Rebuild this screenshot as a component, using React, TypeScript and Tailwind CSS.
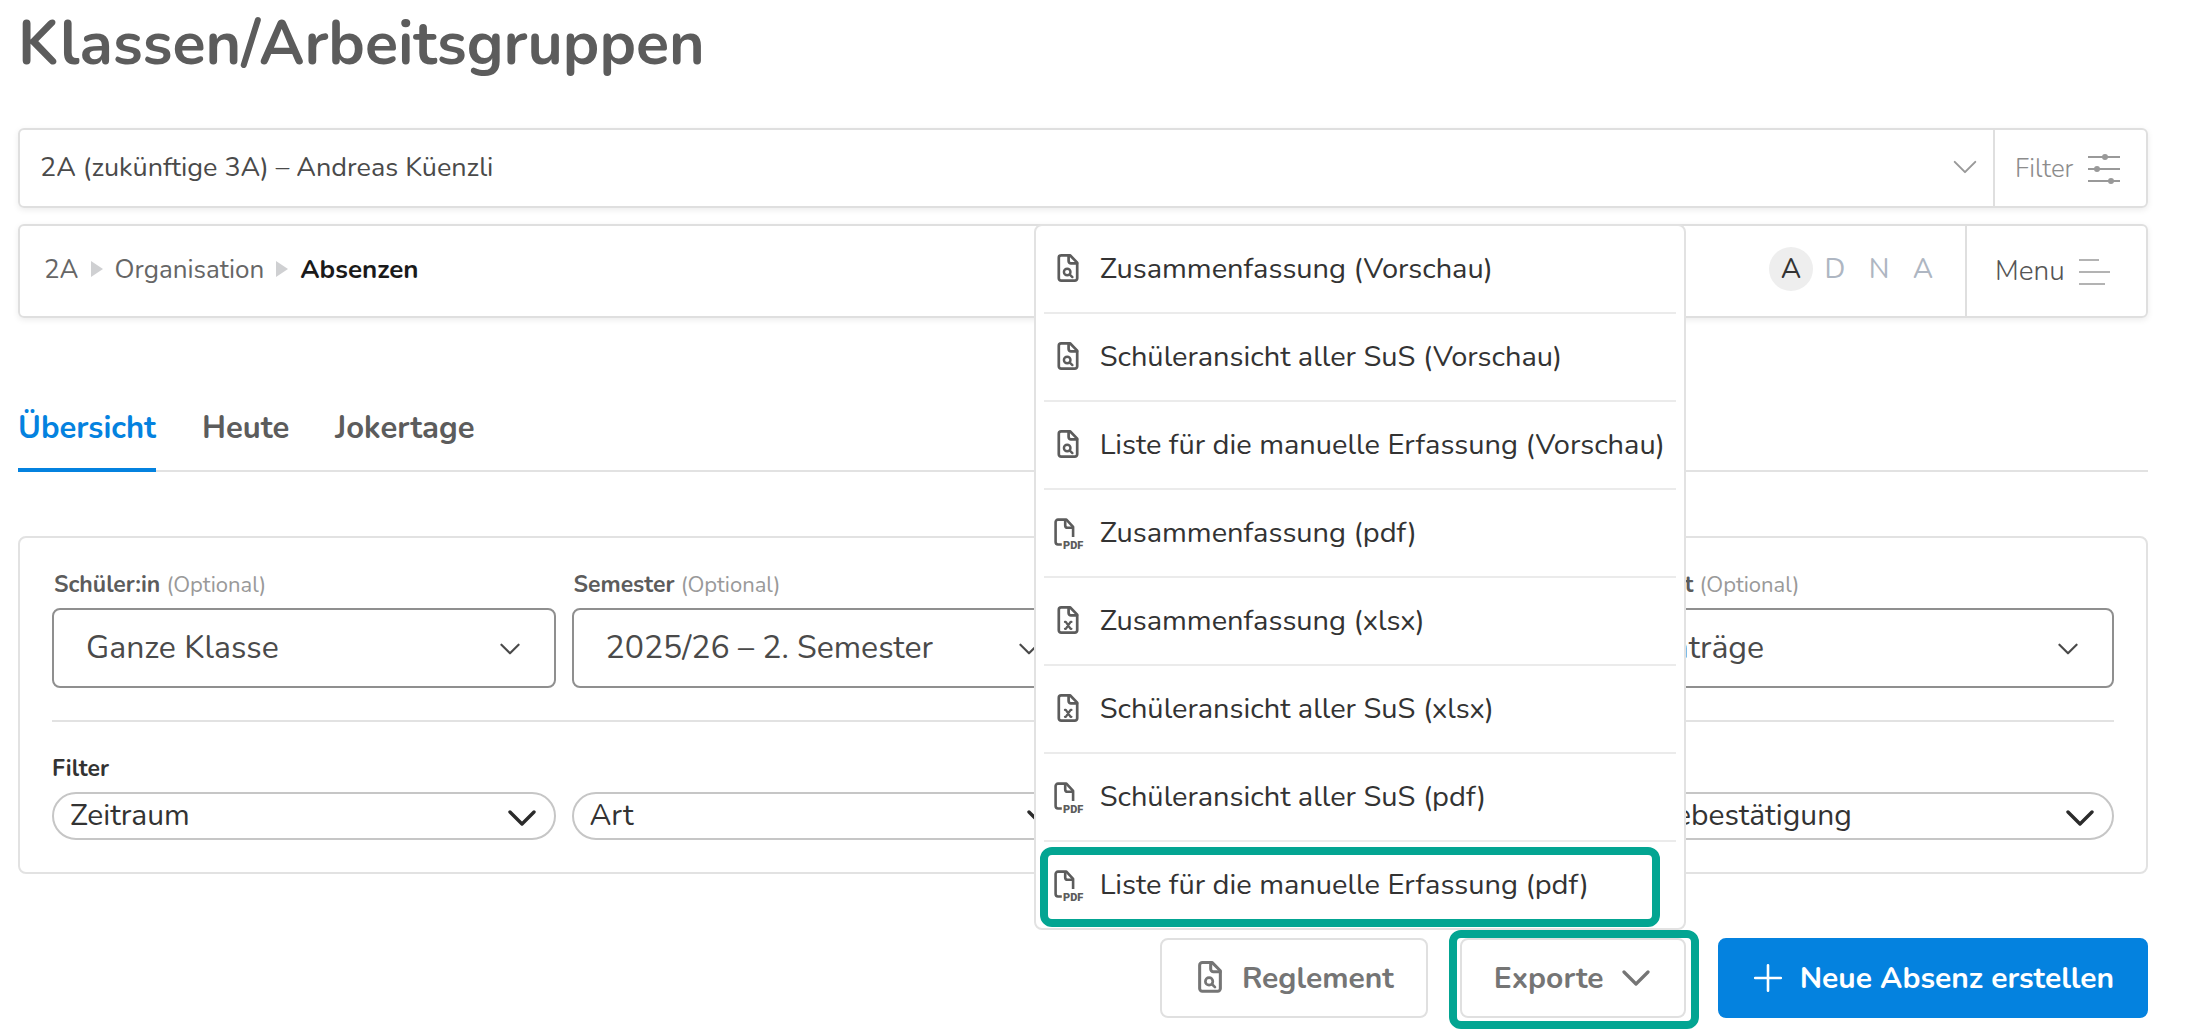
import type { ReactNode } from 'react';

import React from 'react';

type ExportKind = 'preview' | 'pdf' | 'xlsx';

interface ExportEntry {
  label: string;
  kind: ExportKind;
  highlighted?: boolean;
}

const EXPORTS: ExportEntry[] = [
  { label: 'Zusammenfassung (Vorschau)', kind: 'preview' },
  { label: 'Schüleransicht aller SuS (Vorschau)', kind: 'preview' },
  { label: 'Liste für die manuelle Erfassung (Vorschau)', kind: 'preview' },
  { label: 'Zusammenfassung (pdf)', kind: 'pdf' },
  { label: 'Zusammenfassung (xlsx)', kind: 'xlsx' },
  { label: 'Schüleransicht aller SuS (xlsx)', kind: 'xlsx' },
  { label: 'Schüleransicht aller SuS (pdf)', kind: 'pdf' },
  {
    label: 'Liste für die manuelle Erfassung (pdf)',
    kind: 'pdf',
    highlighted: true,
  },
];

const TABS = ['Übersicht', 'Heute', 'Jokertage'];

function FileOutline() {
  return (
    <>
      <path d="M18 3.3H9.2a2.4 2.4 0 0 0-2.4 2.4v20.6a2.4 2.4 0 0 0 2.4 2.4h13.6a2.4 2.4 0 0 0 2.4-2.4V10.6Z" />
      <path d="M16.6 3.6V9a2.4 2.4 0 0 0 2.4 2.4h6" />
    </>
  );
}

function FileSearchIcon({ className }: { className: string }) {
  return (
    <svg
      className={className}
      viewBox="0 1 32 32"
      fill="none"
      stroke="currentColor"
      strokeWidth="2.7"
      strokeLinejoin="round"
      strokeLinecap="round"
      aria-hidden="true"
    >
      <FileOutline />
      <circle cx="15.2" cy="20" r="3.3" strokeWidth="2.4" />
      <path d="m17.8 22.6 2.6 2.5" strokeWidth="2.4" />
    </svg>
  );
}

function FileXlsxIcon({ className }: { className: string }) {
  return (
    <svg
      className={className}
      viewBox="0 1 32 32"
      fill="none"
      stroke="currentColor"
      strokeWidth="2.7"
      strokeLinejoin="round"
      strokeLinecap="round"
      aria-hidden="true"
    >
      <FileOutline />
      <path
        d="M13 17.9h.8l4.8 6.9h.8M19.4 17.9h-.8l-4.8 6.9H13"
        strokeWidth="2.3"
      />
    </svg>
  );
}

function FilePdfIcon({ className }: { className: string }) {
  return (
    <svg
      className={className}
      viewBox="0 0 32 32"
      fill="none"
      stroke="currentColor"
      strokeWidth="2.6"
      strokeLinejoin="round"
      aria-hidden="true"
    >
      <path d="M9.8 27.5H6a2.4 2.4 0 0 1-2.4-2.4V5A2.4 2.4 0 0 1 6 2.6h8.4l6.7 7.2V20" />
      <path d="M13.2 2.8v5.6a2.4 2.4 0 0 0 2.4 2.4h5.4" />
      <text
        x="11"
        y="31.8"
        className="font-['Roboto',sans-serif] text-[11px] font-black"
        fill="currentColor"
        stroke="none"
      >
        PDF
      </text>
    </svg>
  );
}

function Chevron({
  className,
  strokeWidth,
}: {
  className: string;
  strokeWidth: number;
}) {
  return (
    <svg
      className={className}
      viewBox="0 0 28 16"
      fill="none"
      stroke="currentColor"
      strokeWidth={strokeWidth}
      strokeLinecap="round"
      strokeLinejoin="round"
      aria-hidden="true"
    >
      <path d="m2 2 12 12L26 2" />
    </svg>
  );
}

function ExportIcon({ kind }: { kind: ExportKind }) {
  const className = 'size-8 shrink-0 text-[#5c5c5c]';
  if (kind === 'pdf') return <FilePdfIcon className={className} />;
  if (kind === 'xlsx') return <FileXlsxIcon className={className} />;
  return <FileSearchIcon className={className} />;
}

function BreadcrumbArrow() {
  return (
    <svg
      className="h-4 w-3 text-[#cfd0d2]"
      viewBox="0 0 12 16"
      fill="currentColor"
      aria-hidden="true"
    >
      <path d="M0 0v16l12-8Z" />
    </svg>
  );
}

interface FieldProps {
  id: string;
  label: string;
  value: string;
  className?: string;
}

function SelectField({ id, label, value, className = '' }: FieldProps) {
  return (
    <div className={className}>
      <label
        htmlFor={id}
        className="mb-2 ml-0.5 block text-[23px] leading-[30px] font-bold text-[#5c5c5c]"
      >
        {label}{' '}
        <span className="text-[22px] font-normal text-[#999]">(Optional)</span>
      </label>
      <div className="relative">
        <select
          id={id}
          className="block h-20 w-full appearance-none rounded-lg border-2 border-[#8f8f8f] bg-white pl-8 text-[32px] text-[#4a4a4a]"
        >
          <option>{value}</option>
        </select>
        <Chevron
          className="pointer-events-none absolute top-[35px] right-9 h-3 w-5 text-[#4a4a4a]"
          strokeWidth={3}
        />
      </div>
    </div>
  );
}

function PillSelect({ label, className = '' }: { label: string; className?: string }) {
  return (
    <div className={`relative ${className}`}>
      <select
        aria-label={label}
        className="block h-12 w-full appearance-none rounded-full border-2 border-[#c6c6c6] bg-white pl-4 text-[30px] leading-[40px] text-[#333]"
      >
        <option>{label}</option>
      </select>
      <Chevron
        className="pointer-events-none absolute top-[18px] right-5 h-4 w-7 text-[#2b2b2b]"
        strokeWidth={3.4}
      />
    </div>
  );
}

function ActionButton({
  children,
  primary = false,
}: {
  children: ReactNode;
  primary?: boolean;
}) {
  const colors = primary
    ? 'border-[#0482df] bg-[#0482df] text-white'
    : 'border-[#e0e0e0] bg-white text-[#757575]';
  return (
    <button
      type="button"
      className={`flex h-20 items-center gap-4 rounded-lg border-2 px-8 text-[30px] font-bold ${colors}`}
    >
      {children}
    </button>
  );
}

function ExportMenu() {
  return (
    <ul
      role="menu"
      className="absolute right-0 bottom-full z-10 mb-2 w-[652px] divide-y-2 divide-[#ebebeb] rounded-lg border-2 border-[#e2e2e2] bg-white px-2"
    >
      {EXPORTS.map(({ label, kind, highlighted }) => (
        <li key={label} role="none" className="relative">
          <button
            type="button"
            role="menuitem"
            className="flex h-[86px] w-full items-center gap-4 pl-2 text-left text-[29px] whitespace-nowrap text-[#333]"
          >
            <ExportIcon kind={kind} />
            {label}
          </button>
          {highlighted && (
            <div className="pointer-events-none absolute top-[5px] right-4 bottom-px -left-1 rounded-xl border-8 border-[#03a592]" />
          )}
        </li>
      ))}
    </ul>
  );
}

function ClassBar() {
  return (
    <div className="mt-12 flex h-20 rounded-md border-2 border-[#dfdfdf] shadow-[0_2px_6px_rgba(0,0,0,0.08)]">
      <div className="relative grow">
        <select
          aria-label="Klasse"
          className="block h-full w-full appearance-none bg-transparent pl-5 text-[27px] text-[#4a4a4a]"
        >
          <option>2A (zukünftige 3A) – Andreas Küenzli</option>
        </select>
        <Chevron
          className="pointer-events-none absolute top-[30px] right-4 h-[14px] w-6 text-[#999]"
          strokeWidth={2.3}
        />
      </div>
      <button
        type="button"
        className="flex w-[153px] items-center gap-[14px] border-l-2 border-[#dfdfdf] pl-5 text-[26px] font-light text-[#8c8c8c]"
      >
        Filter
        <svg
          className="h-8 w-8 shrink-0 text-[#999]"
          viewBox="0 0 32 32"
          fill="currentColor"
          stroke="currentColor"
          strokeWidth="2"
          aria-hidden="true"
        >
          <path d="M0 5h32M0 17h32M0 29h32" />
          <circle cx="17" cy="5" r="2" />
          <circle cx="9" cy="17" r="2" />
          <circle cx="23" cy="29" r="2" />
        </svg>
      </button>
    </div>
  );
}

function BreadcrumbBar() {
  return (
    <div className="mt-4 flex h-[94px] rounded-md border-2 border-[#dfdfdf] shadow-[0_2px_6px_rgba(0,0,0,0.08)]">
      <nav
        className="flex grow items-center pb-1 pl-6 text-[26px] text-[#666]"
        aria-label="Pfad"
      >
        <ol className="flex items-center gap-3">
          <li>
            <a href="#klasse">2A</a>
          </li>
          <li className="flex items-center gap-3">
            <BreadcrumbArrow />
            <a href="#organisation">Organisation</a>
          </li>
          <li className="flex items-center gap-3">
            <BreadcrumbArrow />
            <span className="font-bold text-[#1a1a1a]">Absenzen</span>
          </li>
        </ol>
      </nav>
      <div className="flex items-center pr-5 pb-1 text-[28px] text-[#aeb6c2]">
        <button
          type="button"
          className="size-11 rounded-full bg-[#eee] text-[#333]"
        >
          A
        </button>
        <button type="button" className="size-11">
          D
        </button>
        <button type="button" className="size-11">
          N
        </button>
        <button type="button" className="size-11">
          A
        </button>
      </div>
      <button
        type="button"
        className="flex w-[181px] items-center gap-[14px] border-l-2 border-[#dfdfdf] pl-7 text-[28px] font-light text-[#555]"
      >
        Menu
        <svg
          className="h-8 w-8 shrink-0 text-[#b3b3b3]"
          viewBox="0 0 32 32"
          fill="none"
          stroke="currentColor"
          strokeWidth="2"
          aria-hidden="true"
        >
          <path d="M0 5h20M0 17h31M0 29h26" />
        </svg>
      </button>
    </div>
  );
}

export default function App() {
  return (
    <main className="bg-white pt-2 pr-[38px] pb-[18px] pl-[18px] font-['Nunito','Open_Sans',sans-serif]">
      <h1 className="text-[61px] leading-[72px] font-bold text-[#5c5c5c]">
        Klassen/Arbeitsgruppen
      </h1>

      <ClassBar />
      <BreadcrumbBar />

      <div
        role="tablist"
        className="mt-[90px] flex gap-[46px] border-b-2 border-[#e2e2e2]"
      >
        {TABS.map((tab, index) => (
          <button
            key={tab}
            type="button"
            role="tab"
            aria-selected={index === 0}
            className={
              index === 0
                ? '-mb-0.5 border-b-4 border-[#0482df] pb-5 text-[31px] leading-[40px] font-bold text-[#0482df]'
                : '-mb-0.5 border-b-4 border-transparent pb-5 text-[31px] leading-[40px] font-bold text-[#5c5c5c]'
            }
          >
            {tab}
          </button>
        ))}
      </div>

      <section className="mt-16 rounded-lg border-2 border-[#e2e2e2] p-8">
        <div className="grid grid-cols-4 gap-4 border-b-2 border-[#e2e2e2] pb-8">
          <SelectField id="schueler" label="Schüler:in" value="Ganze Klasse" />
          <SelectField
            id="semester"
            label="Semester"
            value="2025/26 – 2. Semester"
          />
          <SelectField
            id="ansicht"
            label="Ansicht"
            value="Einträge"
            className="col-start-4"
          />
        </div>
        <h2 className="mt-8 mb-2 text-[23px] leading-[30px] font-bold text-[#333]">
          Filter
        </h2>
        <div className="grid grid-cols-4 gap-4">
          <PillSelect label="Zeitraum" />
          <PillSelect label="Art" />
          <PillSelect label="Lesebestätigung" className="col-start-4" />
        </div>
      </section>

      <div className="mt-16 flex justify-end gap-8">
        <ActionButton>
          <FileSearchIcon className="-mx-0.5 size-9" />
          Reglement
        </ActionButton>
        <div className="relative">
          <ActionButton>
            Exporte
            <Chevron className="mx-0.5 h-4 w-7" strokeWidth={3.2} />
          </ActionButton>
          <div className="pointer-events-none absolute -top-2 -right-[13px] -bottom-[11px] -left-[11px] z-20 rounded-xl border-8 border-[#03a592]" />
          <ExportMenu />
        </div>
        <ActionButton primary>
          <svg
            className="size-8"
            viewBox="0 0 32 32"
            fill="none"
            stroke="currentColor"
            strokeWidth="2.6"
            strokeLinecap="round"
            aria-hidden="true"
          >
            <path d="M16 3.2v25.6M3.2 16h25.6" />
          </svg>
          Neue Absenz erstellen
        </ActionButton>
      </div>
    </main>
  );
}
